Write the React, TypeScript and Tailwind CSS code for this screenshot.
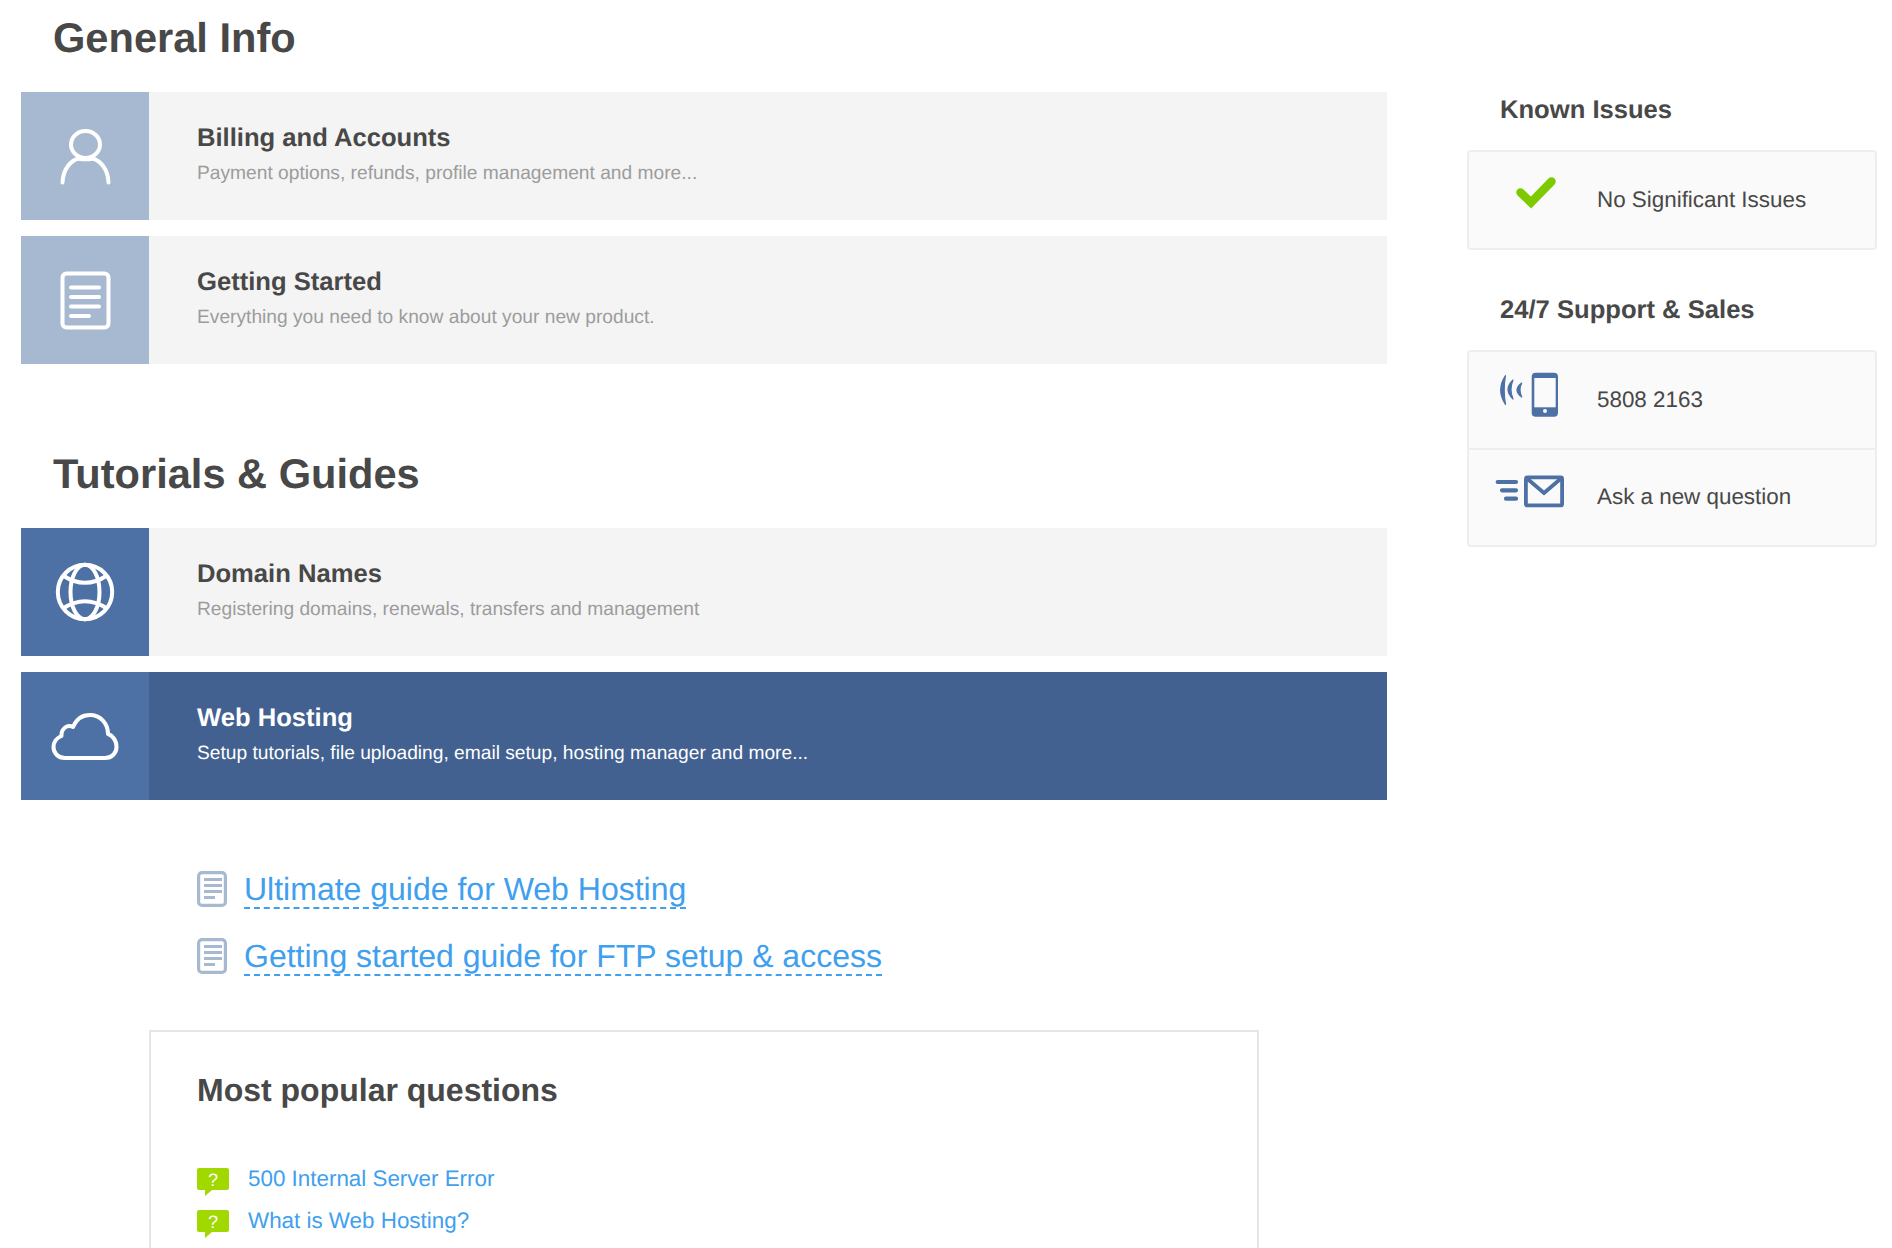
import type { ReactNode } from "react";

const font = "font-['Liberation_Sans',Arial,sans-serif] antialiased [text-rendering:geometricPrecision]";

function UserIcon() {
  return (
    <svg width="64" height="64" viewBox="0 0 64 64" fill="none" stroke="#fff" strokeWidth="4" strokeLinecap="round">
      <ellipse cx="32.5" cy="20.5" rx="14.5" ry="13.5" />
      <path d="M9.5 58.5C10 45 18 36 26 34.5M55.5 58.5C55 45 47 36 39 34.5" />
      <path d="M26 34.5C29 35.5 36 35.5 39 34.5" />
    </svg>
  );
}

function DocIcon() {
  return (
    <svg width="64" height="64" viewBox="0 0 64 64" fill="none" stroke="#fff" strokeWidth="4" strokeLinecap="round">
      <rect x="9.5" y="5.5" width="46" height="54" rx="4" />
      <path d="M18 19.5H46M18 29H46M18 38.5H46M18 48H36" />
    </svg>
  );
}

function GlobeIcon() {
  return (
    <svg width="64" height="64" viewBox="0 0 64 64" fill="none" stroke="#fff" strokeWidth="4">
      <circle cx="32" cy="32" r="27.2" />
      <ellipse cx="32" cy="32" rx="14.5" ry="27.2" />
      <path d="M10 15.5Q32 30 54 15.5M10 48.5Q32 34 54 48.5" />
    </svg>
  );
}

function CloudIcon() {
  return (
    <svg width="70" height="64" viewBox="0 0 70 64" fill="none" stroke="#fff" strokeWidth="4" strokeLinejoin="round">
      <path d="M15 54H55C62 54 66.5 49 66.5 43C66.5 36 62 31 58 30C58 19 50 11 40 11C32 11 26 16 23 23C17 20 11 25 11.5 32C6.5 34 3.5 38 3.5 43C3.5 49 8 54 15 54Z" />
    </svg>
  );
}

function SmallDoc() {
  return (
    <svg width="30" height="36" viewBox="0 0 30 36" fill="none" stroke="#a7b9d1" className="shrink-0">
      <rect x="1.6" y="1.6" width="26.8" height="32.8" rx="3.5" strokeWidth="3.2" />
      <path d="M7 8.5H25M7 14.5H25M7 20.5H25M7 26.5H18" strokeWidth="3.2" />
    </svg>
  );
}

function QuestionIcon() {
  return (
    <svg width="32" height="28" viewBox="0 0 32 28" className="shrink-0">
      <path d="M2 0H30A2 2 0 0 1 32 2V20A2 2 0 0 1 30 22H15L8 28V22H2A2 2 0 0 1 0 20V2A2 2 0 0 1 2 0Z" fill="#a0d800" />
      <text x="16" y="18" textAnchor="middle" fontSize="18" fill="#fff" fontFamily="Liberation Sans">?</text>
    </svg>
  );
}

function CheckIcon() {
  return (
    <svg width="50" height="42" viewBox="0 0 50 42" fill="none" stroke="#7fc900" strokeWidth="8.5" strokeLinecap="round">
      <path d="M10.5 21.5L21 31.5L41.5 10.5" />
    </svg>
  );
}

function PhoneIcon() {
  return (
    <svg width="66" height="50" viewBox="0 0 66 50" fill="none">
      <rect x="35.7" y="2.7" width="26.3" height="44" rx="4" fill="#4d71a5" />
      <rect x="38.3" y="8" width="21.4" height="29.3" fill="#fafafa" />
      <circle cx="49" cy="41" r="2" fill="#fafafa" />
      <g fill="#4d71a5" stroke="#4d71a5" strokeWidth="1.2" strokeLinejoin="round">
        <path d="M9.5 5.5Q-0.1 20 9.5 34.5Q6.9 20 9.5 5.5Z" />
        <path d="M17 10Q7 19.5 17 29Q13 19.5 17 10Z" />
        <path d="M25.7 13Q16.3 20 25.7 27Q22.3 20 25.7 13Z" />
      </g>
    </svg>
  );
}

function MailIcon() {
  return (
    <svg width="76" height="44" viewBox="0 0 76 44" fill="none" stroke="#4d71a5">
      <rect x="33.9" y="8.4" width="36.2" height="28" rx="1.5" strokeWidth="3.8" />
      <path d="M35 9.5L52 24L69 9.5" strokeWidth="3.8" />
      <path d="M5.7 13H24M10 21.3H24M14 29.7H24" strokeWidth="4.2" strokeLinecap="round" />
    </svg>
  );
}

function TopicRow({ icon, title, text, tone, active }: { icon: ReactNode; title: string; text: string; tone: "light" | "dark"; active?: boolean }) {
  return (
    <div className={`flex h-32 ${active ? "bg-[#426190]" : "bg-[#f4f4f4]"}`}>
      <div className={`flex w-32 shrink-0 items-center justify-center ${tone === "light" ? "bg-[#a7b9d1]" : "bg-[#4d71a5]"}`}>{icon}</div>
      <div className="pl-12 pt-[29px]">
        <h3 className={`text-[25.6px] font-bold leading-[35px] ${active ? "text-white" : "text-[#484848]"}`}>{title}</h3>
        <p className={`mt-[2px] text-[19.2px] leading-[32px] ${active ? "text-white" : "text-[#9c9c9c]"}`}>{text}</p>
      </div>
    </div>
  );
}

function GuideLink({ label }: { label: string }) {
  return (
    <div className="flex h-[37px] items-start gap-[17px]">
      <SmallDoc />
      <a className="mt-[1px] border-b-2 border-dashed border-[#40a0ee] text-[32px] leading-[35px] text-[#40a0ee]">{label}</a>
    </div>
  );
}

function Question({ label }: { label: string }) {
  return (
    <div className="flex h-[28px] items-start gap-[19px]">
      <QuestionIcon />
      <a className="text-[22.4px] leading-[22px] text-[#40a0ee]">{label}</a>
    </div>
  );
}

function SideRow({ icon, pad, label, textPad, className }: { icon: ReactNode; pad: string; label: string; textPad: string; className: string }) {
  return (
    <div className={`flex ${className}`}>
      <div className={`w-[128px] shrink-0 ${pad}`}>{icon}</div>
      <div className={`${textPad} text-[22.4px] leading-[30px] text-[#484848]`}>{label}</div>
    </div>
  );
}

export default function App() {
  return (
    <div className={`${font} flex h-[1248px] w-[1892px] overflow-hidden bg-white`}>
      <main className="ml-[21px] w-[1366px] shrink-0">
        <h2 className="mb-[17px] pt-[1px] pl-8 text-[41.6px] font-bold leading-[74px] text-[#484848]">General Info</h2>
        <div className="flex flex-col gap-4">
          <TopicRow icon={<UserIcon />} title="Billing and Accounts" text="Payment options, refunds, profile management and more..." tone="light" />
          <TopicRow icon={<DocIcon />} title="Getting Started" text="Everything you need to know about your new product." tone="light" />
        </div>

        <h2 className="mb-[17px] mt-[72px] pt-[1px] pl-8 text-[41.6px] font-bold leading-[74px] text-[#484848]">Tutorials &amp; Guides</h2>
        <div className="flex flex-col gap-4">
          <TopicRow icon={<GlobeIcon />} title="Domain Names" text="Registering domains, renewals, transfers and management" tone="dark" />
          <TopicRow icon={<CloudIcon />} title="Web Hosting" text="Setup tutorials, file uploading, email setup, hosting manager and more..." tone="dark" active />
        </div>

        <div className="ml-[176px] mt-[71px] flex flex-col gap-[30px]">
          <GuideLink label="Ultimate guide for Web Hosting" />
          <GuideLink label="Getting started guide for FTP setup & access" />
        </div>

        <section className="ml-32 mt-[55px] h-[400px] w-[1110px] border-2 border-[#e5e5e5] pl-[46px] pt-[38px]">
          <h3 className="text-[32px] font-bold leading-[40px] text-[#484848]">Most popular questions</h3>
          <div className="mt-[58px] flex flex-col gap-[14px]">
            <Question label="500 Internal Server Error" />
            <Question label="What is Web Hosting?" />
          </div>
        </section>
      </main>

      <aside className="ml-20 w-[410px] shrink-0 pt-[93px]">
        <h3 className="pl-[33px] text-[25.6px] font-bold leading-[34px] text-[#484848]">Known Issues</h3>
        <div className="mt-[23px] h-[100px] rounded border-2 border-[#eee] bg-[#fafafa]">
          <SideRow icon={<CheckIcon />} pad="pl-[41px] pt-[19px]" label="No Significant Issues" textPad="pt-[33px]" className="h-[96px]" />
        </div>
        <h3 className="mt-[43px] pl-[33px] text-[25.6px] font-bold leading-[34px] text-[#484848]">24/7 Support &amp; Sales</h3>
        <div className="mt-[23px] rounded border-2 border-[#eee] bg-[#fafafa]">
          <SideRow icon={<PhoneIcon />} pad="pl-[27px] pt-[18px]" label="5808 2163" textPad="pt-[33px]" className="h-[98px] border-b-2 border-[#eee]" />
          <SideRow icon={<MailIcon />} pad="pl-[23px] pt-[19px]" label="Ask a new question" textPad="pt-[32px]" className="h-[95px]" />
        </div>
      </aside>
    </div>
  );
}
